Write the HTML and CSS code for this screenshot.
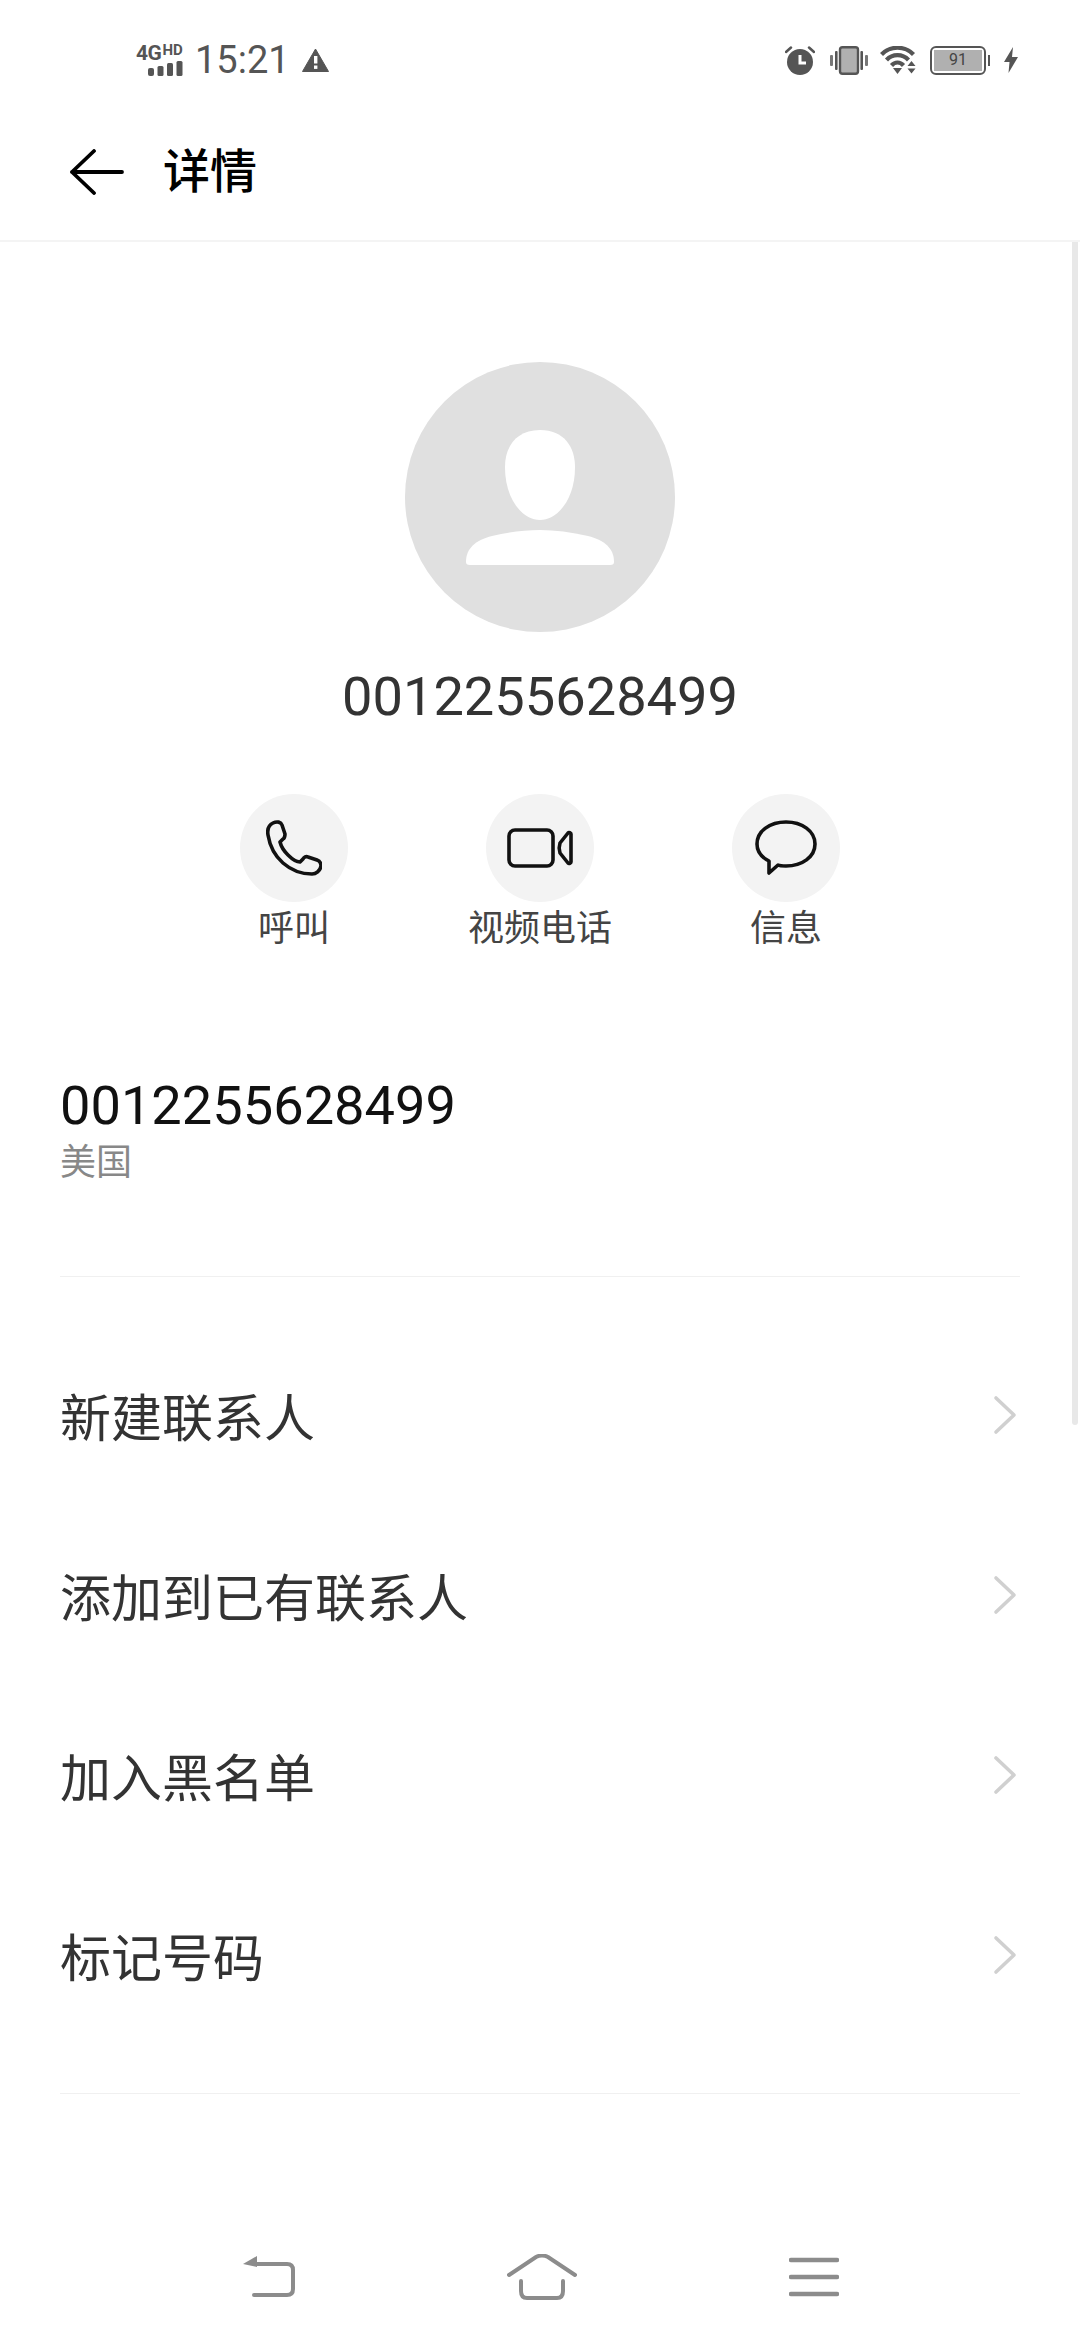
FILE: index.html
```html
<!DOCTYPE html>
<html lang="zh-CN">

<head>
    <meta charset="UTF-8">
    <meta name="viewport" content="width=device-width, initial-scale=1.0">
    <title>详情</title>
    <link rel="stylesheet" href="styles.css">
</head>

<body>
    <div class="screen">
        <div class="statusbar">
            <div class="status-left">
                <div class="signal">
                    <span class="net"><span class="net-4g">4G</span><span class="net-hd">HD</span></span>
                    <svg class="bars" width="35" height="15" viewBox="0 0 35 15">
                        <rect x="0" y="7" width="6" height="8" rx="2" />
                        <rect x="9.500" y="5" width="6" height="10" rx="1.500" />
                        <rect x="19" y="2" width="6" height="13" rx="1.500" />
                        <rect x="28.500" y="0" width="6" height="15" rx="1.500" />
                    </svg>
                </div>
                <span class="time">15:21</span>
                <svg class="warn" width="27" height="24" viewBox="0 0 27 24">
                    <path d="M13.500 1 L26.500 23.500 H0.500 Z" fill="#555" stroke="#555" stroke-linejoin="round" />
                    <rect x="12" y="8" width="3.400" height="7.500" fill="#fff" />
                    <rect x="12" y="17.500" width="3.400" height="3.400" fill="#fff" />
                </svg>
            </div>
            <div class="status-right">
                <svg width="30" height="30" viewBox="0 0 30 30">
                    <circle cx="15" cy="17" r="13" fill="#555" />
                    <path d="M15 10 V18 H21" fill="none" stroke="#fff" stroke-width="3" />
                    <path d="M1 7 L6 2.500 M29 7 L24 2.500" stroke="#555" stroke-width="2.500" stroke-linecap="round" />
                </svg>
                <svg class="vib" width="38" height="29" viewBox="0 0 38 29">
                    <rect x="10" y="1.200" width="18" height="26.600" rx="2.500" fill="#b0b0b0" stroke="#555" stroke-width="2.400" />
                    <rect x="0" y="9" width="3" height="11" rx="1" fill="#777" />
                    <rect x="5" y="5" width="2.600" height="19" rx="1" fill="#555" />
                    <rect x="30.400" y="5" width="2.600" height="19" rx="1" fill="#555" />
                    <rect x="35" y="9" width="3" height="11" rx="1" fill="#777" />
                </svg>
                <svg class="wifi" width="38" height="28" viewBox="0 0 38 28">
                    <path d="M1.500 8.500 C10 -0.500 25 -0.500 33.500 8.500" fill="none" stroke="#555" stroke-width="4.200" />
                    <path d="M6.500 14 C12.500 7.500 22.500 7.500 28.500 14" fill="none" stroke="#555" stroke-width="4.200" />
                    <path d="M11.500 19.500 C15 15.500 20 15.500 23.500 19.500" fill="none" stroke="#555" stroke-width="4.200" />
                    <path d="M13 22 H22 L17.500 28 Z" fill="#555" />
                    <path d="M31.500 15 L35.500 20 H27.500 Z M27.500 22.500 H35.500 L31.500 27.500 Z" fill="#555" />
                </svg>
                <div class="battery">
                    <div class="battery-body"><span class="battery-level">91</span></div>
                    <span class="battery-tip"></span>
                </div>
                <svg class="bolt" width="14" height="26" viewBox="0 0 14 26">
                    <path d="M9 0 L0 15 H5.500 L4.500 26 L14 10 H8 Z" fill="#555" />
                </svg>
            </div>
        </div>

        <div class="header">
            <svg class="back" width="54" height="46" viewBox="0 0 54 46">
                <path d="M24 2 L2 23 L24 44 M2 23 H52" fill="none" stroke="#000" stroke-width="3.800" stroke-linecap="round" stroke-linejoin="round" />
            </svg>
            <h1>详情</h1>
        </div>

        <div class="profile">
            <svg class="avatar" width="270" height="270" viewBox="0 0 270 270">
                <circle cx="135" cy="135" r="135" fill="#e0e0e0" />
                <path d="M135 68 C159 68 170 85 170 105 C170 138 152 158 135 158 C118 158 100 138 100 105 C100 85 111 68 135 68 Z" fill="#fff" />
                <path d="M61 200 C61 186 71 178 87 174 C104 170 120 168 135 168 C150 168 166 170 183 174 C199 178 209 186 209 200 C209 202 208 203 205 203 H65 C62 203 61 202 61 200 Z" fill="#fff" />
            </svg>
            <div class="name">0012255628499</div>

            <div class="actions">
                <div class="action">
                    <div class="action-icon">
                        <svg width="56" height="56" viewBox="0 0 56 56">
                            <path d="M7 3 C3 5 1 9 2 15 C4 27 9 36 17 43 C25 50 35 54 46 54 C50 54 54 51 55 46 C55 43 54 41 51 40 L42 37 C40 36 38 37 37 39 L34 42 C31 42 26 39 22 35 C18 31 15 26 14 22 L17 19 C19 18 19 16 19 14 L16 5 C15 2 11 1 7 3 Z" fill="none" stroke="#111" stroke-width="3.600" stroke-linejoin="round" />
                        </svg>
                    </div>
                    <span>呼叫</span>
                </div>
                <div class="action">
                    <div class="action-icon">
                        <svg width="66" height="40" viewBox="0 0 66 40">
                            <rect x="2" y="2" width="44" height="36" rx="6" fill="none" stroke="#111" stroke-width="3.600" />
                            <path d="M53 15 L61 5 C62 4 64 5 64 6 V34 C64 35 62 36 61 35 L53 25 C52 22 52 18 53 15 Z" fill="none" stroke="#111" stroke-width="3.600" stroke-linejoin="round" />
                        </svg>
                    </div>
                    <span>视频电话</span>
                </div>
                <div class="action">
                    <div class="action-icon">
                        <svg width="62" height="56" viewBox="0 0 62 56">
                            <path d="M31 2 C47 2 60 11 60 24 C60 37 47 46 31 46 C28 46 25 46 23 45 L14 53 V41 C6 37 2 31 2 24 C2 11 15 2 31 2 Z" fill="none" stroke="#111" stroke-width="3.600" stroke-linejoin="round" />
                        </svg>
                    </div>
                    <span>信息</span>
                </div>
            </div>
        </div>

        <div class="number-block">
            <div class="number">0012255628499</div>
            <div class="region">美国</div>
        </div>

        <ul class="menu">
            <li>新建联系人<svg class="chevron" width="24" height="40" viewBox="0 0 24 40"><path d="M3 3 L21 20 L3 37" fill="none" stroke="#d0d0d0" stroke-width="3.600" stroke-linecap="round" stroke-linejoin="round" /></svg></li>
            <li>添加到已有联系人<svg class="chevron" width="24" height="40" viewBox="0 0 24 40"><path d="M3 3 L21 20 L3 37" fill="none" stroke="#d0d0d0" stroke-width="3.600" stroke-linecap="round" stroke-linejoin="round" /></svg></li>
            <li>加入黑名单<svg class="chevron" width="24" height="40" viewBox="0 0 24 40"><path d="M3 3 L21 20 L3 37" fill="none" stroke="#d0d0d0" stroke-width="3.600" stroke-linecap="round" stroke-linejoin="round" /></svg></li>
            <li>标记号码<svg class="chevron" width="24" height="40" viewBox="0 0 24 40"><path d="M3 3 L21 20 L3 37" fill="none" stroke="#d0d0d0" stroke-width="3.600" stroke-linecap="round" stroke-linejoin="round" /></svg></li>
        </ul>

        <div class="navbar">
            <svg class="nav-back" width="52" height="42" viewBox="0 0 52 42">
                <path d="M12 8 H44 C48 8 50 10 50 14 V33 C50 37 48 39 44 39 H11" fill="none" stroke="#8c8c8c" stroke-width="4" stroke-linecap="round" />
                <path d="M0 8 L14 0 V11 Z" fill="#8c8c8c" />
            </svg>
            <svg class="nav-home" width="70" height="46" viewBox="0 0 70 46">
                <path d="M2 21 L29 3 C33 1 37 1 41 3 L68 21" fill="none" stroke="#8c8c8c" stroke-width="4" stroke-linecap="round" />
                <path d="M14 27 V37 C14 42 16 44 20 44 H50 C54 44 56 42 56 37 V27" fill="none" stroke="#8c8c8c" stroke-width="4" stroke-linecap="round" />
            </svg>
            <svg class="nav-menu" width="50" height="40" viewBox="0 0 50 40">
                <path d="M2 3 H48 M2 20 H48 M2 37 H48" fill="none" stroke="#8c8c8c" stroke-width="4.400" stroke-linecap="round" />
            </svg>
        </div>

        <div class="scrollbar"></div>
    </div>
</body>

</html>
```

FILE: styles.css
```css
body {
    margin: 0;
    font-family: Roboto, "Noto Sans CJK SC", sans-serif;
    background-color: #ffffff;
}

.screen {
    position: relative;
    width: 1080px;
    height: 2340px;
    overflow: hidden;
    display: flex;
    flex-direction: column;
    background-color: #ffffff;
}

.statusbar {
    height: 120px;
    box-sizing: border-box;
    padding: 0 62px 0 136px;
    display: flex;
    justify-content: space-between;
    align-items: center;
}

.status-left {
    display: flex;
    align-items: center;
}

.signal {
    width: 47px;
    height: 31px;
    display: flex;
    flex-direction: column;
    align-items: flex-end;
    justify-content: space-between;
    fill: #555;
}

.net {
    display: flex;
    align-items: flex-start;
    width: 47px;
    height: 16px;
    font-weight: 700;
    color: #555;
    line-height: 16px;
}

.net-4g {
    font-size: 21px;
    letter-spacing: -0.500px;
}

.net-hd {
    font-size: 15px;
    line-height: 11px;
    margin-left: 1px;
}

.time {
    margin-left: 12px;
    font-size: 38px;
    line-height: 44px;
    color: #555;
}

.warn {
    margin-left: 12px;
}

.status-right {
    display: flex;
    align-items: center;
}

.vib {
    margin-left: 15px;
}

.wifi {
    margin-left: 12px;
}

.battery {
    margin-left: 12px;
    display: flex;
    align-items: center;
}

.battery-body {
    width: 56px;
    height: 29px;
    box-sizing: border-box;
    border: 2.500px solid #555;
    border-radius: 6px;
    padding: 2px;
    display: flex;
}

.battery-level {
    flex: 1;
    background-color: #b0b0b0;
    font-size: 16px;
    line-height: 20px;
    text-align: center;
    color: #444;
}

.battery-tip {
    width: 2px;
    height: 11px;
    margin-left: 2px;
    background-color: #555;
}

.bolt {
    margin-left: 14px;
}

.header {
    height: 122px;
    box-sizing: border-box;
    padding: 0 0 16px 70px;
    display: flex;
    align-items: center;
    border-bottom: 2px solid #f4f4f4;
}

.header h1 {
    margin: 0 0 0 39px;
    font-size: 47px;
    line-height: 60px;
    font-weight: 500;
    color: #000;
}

.profile {
    padding-top: 120px;
    display: flex;
    flex-direction: column;
    align-items: center;
}

.avatar {
    display: block;
}

.name {
    margin-top: 33px;
    font-size: 54.200px;
    line-height: 64px;
    color: #333;
}

.actions {
    margin-top: 65px;
    display: grid;
    grid-template-columns: repeat(3, 246px);
}

.action {
    display: flex;
    flex-direction: column;
    align-items: center;
    gap: 7px;
    font-size: 36px;
    line-height: 40px;
    color: #444;
}

.action-icon {
    width: 108px;
    height: 108px;
    border-radius: 50%;
    background-color: #f3f3f3;
    display: flex;
    align-items: center;
    justify-content: center;
}

.number-block {
    margin: 125px 60px 0;
    padding-bottom: 91px;
    border-bottom: 1px solid #f0f0f0;
}

.number {
    font-size: 54.200px;
    line-height: 64px;
    color: #111;
}

.region {
    margin-top: 3px;
    font-size: 36px;
    line-height: 44px;
    color: #888;
}

.menu {
    list-style: none;
    margin: 48px 60px 0;
    padding: 0 0 48px;
    border-bottom: 1px solid #f0f0f0;
}

.menu li {
    height: 180px;
    display: flex;
    align-items: center;
    justify-content: space-between;
    font-size: 51px;
    color: #333;
}

.chevron {
    margin-right: 3px;
}

.navbar {
    margin-top: auto;
    height: 130px;
    box-sizing: border-box;
    padding-top: 3px;
    display: grid;
    grid-template-columns: repeat(3, 270px);
    justify-content: center;
    justify-items: center;
    align-items: center;
}

.nav-back {
    transform: translateX(-1px);
}

.nav-home {
    transform: translateX(2px);
}

.nav-menu {
    transform: translateX(4px);
}

.scrollbar {
    position: absolute;
    top: 242px;
    right: 2px;
    width: 6px;
    height: 1183px;
    border-radius: 0 0 3px 3px;
    background-color: #e8e8e8;
}
```
